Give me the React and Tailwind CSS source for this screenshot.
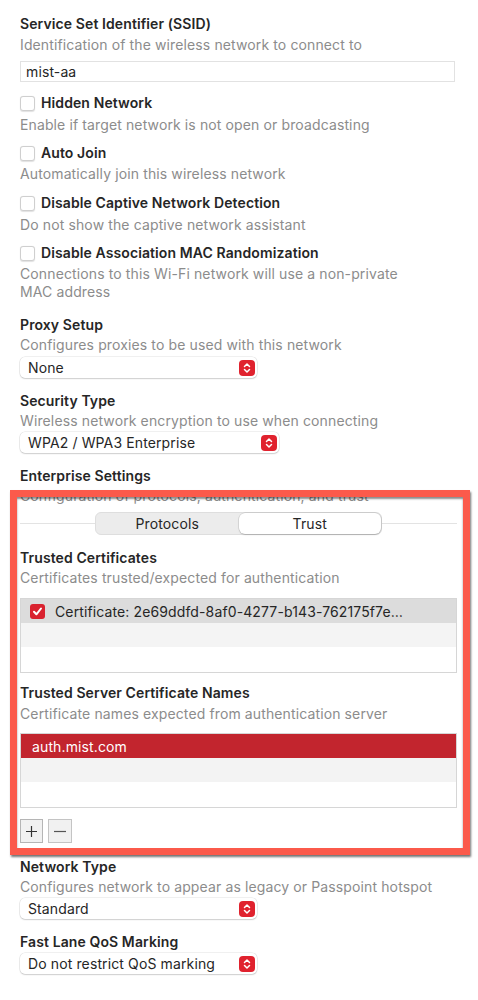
import React from "react";

const Title = ({ children, className = "" }) => (
  <div className={"h-[20px] leading-[20px] text-[14px] font-semibold tracking-[0.1px] text-[#262626] " + className}>{children}</div>
);
const Desc = ({ children, className = "" }) => (
  <div className={"leading-[20px] text-[14px] tracking-[0.12px] text-[#8c8c8c] " + className}>{children}</div>
);

const Check = ({ label, className = "" }) => (
  <div className={"flex h-[20px] items-center " + className}>
    <div className="h-[15px] w-[15px] rounded-[3px] border border-[#cfcfcf] bg-white shadow-[0_0.5px_1px_rgba(0,0,0,0.12)]" />
    <span className="ml-[6px] text-[14px] font-semibold leading-[20px] tracking-[0.1px] text-[#262626]">{label}</span>
  </div>
);

const Stepper = () => (
  <div className="flex h-[16px] w-[16px] items-center justify-center rounded-[4px] bg-[#e0222e]">
    <svg width="8" height="12" viewBox="0 0 8 12" fill="none" stroke="white" strokeWidth="1.5" strokeLinecap="round" strokeLinejoin="round">
      <path d="M1.5 4.5 L4 2 L6.5 4.5" />
      <path d="M1.5 7.5 L4 10 L6.5 7.5" />
    </svg>
  </div>
);

const Select = ({ value, w, className = "" }) => (
  <div
    className={"flex h-[21px] items-center justify-between rounded-[5px] bg-white pl-[8px] pr-[2px] shadow-[0_0_0_0.5px_rgba(0,0,0,0.12),0_1px_1.5px_rgba(0,0,0,0.14)] " + w + " " + className}
  >
    <span className="text-[14px] leading-[20px] tracking-[0.12px] text-[#262626]">{value}</span>
    <Stepper />
  </div>
);

export default function App() {
  return (
    <div className="relative min-h-[1000px] w-[478px] bg-white" style={{ fontFamily: "Inter, 'Noto Sans', sans-serif" }}>
      <div className="pl-[20px] pr-[21px] pt-[14px]">
        <Title>Service Set Identifier (SSID)</Title>
        <Desc className="mt-[1px]">Identification of the wireless network to connect to</Desc>
        <div className="mt-[6px] flex h-[21px] w-[435px] items-center border border-[#e2e2e2] bg-white pl-[5px] text-[14px] tracking-[0.12px] text-[#262626]">
          mist-aa
        </div>

        <Check label="Hidden Network" className="mt-[11px]" />
        <Desc className="mt-[2px]">Enable if target network is not open or broadcasting</Desc>

        <Check label="Auto Join" className="mt-[8px]" />
        <Desc className="mt-[1px]">Automatically join this wireless network</Desc>

        <Check label="Disable Captive Network Detection" className="mt-[9px]" />
        <Desc className="mt-[2px]">Do not show the captive network assistant</Desc>

        <Check label="Disable Association MAC Randomization" className="mt-[8px]" />
        <Desc className="mt-[2px] !leading-[18px]">
          Connections to this Wi-Fi network will use a non-private
          <br />
          MAC address
        </Desc>

        <Title className="mt-[14px]">Proxy Setup</Title>
        <Desc>Configures proxies to be used with this network</Desc>
        <Select value="None" w="w-[237px]" className="mt-[2px]" />

        <Title className="mt-[13px]">Security Type</Title>
        <Desc>Wireless network encryption to use when connecting</Desc>
        <Select value="WPA2 / WPA3 Enterprise" w="w-[259px]" className="mt-[1px]" />

        <Title className="mt-[13px]">Enterprise Settings</Title>
        <Desc>Configuration of protocols, authentication, and trust</Desc>

        <div className="relative mt-[6px] h-[23px]">
          <div className="absolute left-0 right-0 top-[11px] h-px bg-[#e3e3e3]" />
          <div className="absolute left-[75px] top-0 flex h-[23px] w-[287px] rounded-[6px] border border-[#dedede] bg-[#ececec]">
            <div className="flex flex-1 items-center justify-center text-[14px] tracking-[0.12px] text-[#262626]">Protocols</div>
            <div className="flex flex-1 items-center justify-center rounded-[6px] bg-white text-[14px] tracking-[0.12px] text-[#262626] shadow-[0_0_0_0.5px_rgba(0,0,0,0.15),0_1px_1.5px_rgba(0,0,0,0.15)]">
              Trust
            </div>
          </div>
        </div>

        <Title className="mt-[13px]">Trusted Certificates</Title>
        <Desc>Certificates trusted/expected for authentication</Desc>
        <div className="mt-[10px] w-[437px] border border-[#d6d6d6]">
          <div className="flex h-[24px] items-center bg-[#dcdcdc] pl-[9px]">
            <div className="flex h-[15px] w-[15px] items-center justify-center rounded-[3px] bg-[#d9222f]">
              <svg width="11" height="11" viewBox="0 0 11 11" fill="none" stroke="white" strokeWidth="2" strokeLinecap="round" strokeLinejoin="round">
                <path d="M2 5.8 L4.4 8.3 L9 2.5" />
              </svg>
            </div>
            <span className="ml-[10px] text-[14px] tracking-[0.12px] text-[#262626]">Certificate: 2e69ddfd-8af0-4277-b143-762175f7e…</span>
          </div>
          <div className="h-[24px] bg-[#f4f4f4]" />
          <div className="h-[25px] bg-white" />
        </div>

        <Title className="mt-[10px]">Trusted Server Certificate Names</Title>
        <Desc className="mt-[1px]">Certificate names expected from authentication server</Desc>
        <div className="mt-[9px] w-[437px] border border-[#d6d6d6]">
          <div className="flex h-[24px] items-center bg-[#c2252e] pl-[11px] text-[14px] tracking-[0.12px] text-white">auth.mist.com</div>
          <div className="h-[24px] bg-[#f3f3f3]" />
          <div className="h-[25px] bg-white" />
        </div>

        <div className="mt-[11px] flex gap-[5px]">
          <div className="flex h-[24px] w-[23px] items-center justify-center border border-[#b5b5b5] bg-[#f1f1f1]">
            <svg width="13" height="13" viewBox="0 0 13 13" stroke="#333" strokeWidth="1.2">
              <path d="M6.5 1 V12 M1 6.5 H12" />
            </svg>
          </div>
          <div className="flex h-[24px] w-[24px] items-center justify-center border border-[#c4c4c4] bg-[#f1f1f1]">
            <svg width="14" height="13" viewBox="0 0 14 13" stroke="#555" strokeWidth="1.2">
              <path d="M1 6.5 H13" />
            </svg>
          </div>
        </div>

        <Title className="mt-[14px]">Network Type</Title>
        <Desc>Configures network to appear as legacy or Passpoint hotspot</Desc>
        <Select value="Standard" w="w-[237px]" className="mt-[1px]" />

        <Title className="mt-[13px]">Fast Lane QoS Marking</Title>
        <Select value="Do not restrict QoS marking" w="w-[237px]" className="mt-[1px]" />
      </div>

      <div className="pointer-events-none absolute left-[10px] top-[490px] h-[365px] w-[460px] border-[7px] border-[#fb5a4b] shadow-[1px_2px_2px_rgba(0,0,0,0.55),inset_0_2px_2px_rgba(0,0,0,0.45)]" />
    </div>
  );
}
